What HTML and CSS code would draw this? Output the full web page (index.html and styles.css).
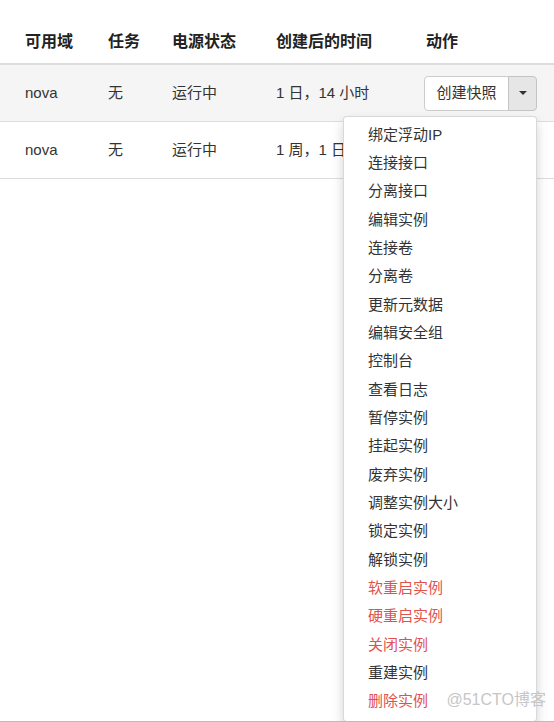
FILE: index.html
```html
<!DOCTYPE html>
<html lang="zh">
<head>
<meta charset="utf-8">
<link rel="stylesheet" href="styles.css">
</head>
<body>
<div class="table">
  <div class="row head">
    <div class="c c1">可用域</div>
    <div class="c c2">任务</div>
    <div class="c c3">电源状态</div>
    <div class="c c4">创建后的时间</div>
    <div class="c c5">动作</div>
  </div>
  <div class="row hover">
    <div class="c c1">nova</div>
    <div class="c c2">无</div>
    <div class="c c3">运行中</div>
    <div class="c c4">1 日，14 小时</div>
    <div class="c c5">
      <div class="btn-group">
        <span class="btn main">创建快照</span>
        <span class="btn caret-btn active"><span class="caret"></span></span>
        <ul class="menu">
          <li>绑定浮动IP</li>
          <li>连接接口</li>
          <li>分离接口</li>
          <li>编辑实例</li>
          <li>连接卷</li>
          <li>分离卷</li>
          <li>更新元数据</li>
          <li>编辑安全组</li>
          <li>控制台</li>
          <li>查看日志</li>
          <li>暂停实例</li>
          <li>挂起实例</li>
          <li>废弃实例</li>
          <li>调整实例大小</li>
          <li>锁定实例</li>
          <li>解锁实例</li>
          <li class="danger">软重启实例</li>
          <li class="danger">硬重启实例</li>
          <li class="danger">关闭实例</li>
          <li>重建实例</li>
          <li class="danger">删除实例</li>
        </ul>
      </div>
    </div>
  </div>
  <div class="row">
    <div class="c c1">nova</div>
    <div class="c c2">无</div>
    <div class="c c3">运行中</div>
    <div class="c c4">1 周，1 日</div>
    <div class="c c5">
      <div class="btn-group">
        <span class="btn main">创建快照</span>
        <span class="btn caret-btn"><span class="caret"></span></span>
      </div>
    </div>
  </div>
</div>
<div class="watermark">@51CTO博客</div>
</body>
</html>
```

FILE: styles.css
```css
html, body {
  margin: 0;
  padding: 0;
}
body {
  height: 721px;
  border-bottom: 1px solid #9cc3e6;
  background: #fff;
  font-family: "Liberation Sans", "Noto Sans CJK SC", sans-serif;
  font-size: 15px;
  color: #333;
  position: relative;
  overflow: hidden;
}
.table {
  width: 100%;
}
.row {
  display: grid;
  grid-template-columns: 25px 83px 64px 104px 148px 1fr;
  align-items: center;
  height: 56px;
  border-bottom: 1px solid #ddd;
}
.row::before {
  content: "";
}
.row.head {
  height: 63px;
  align-items: end;
  border-bottom: 2px solid #ddd;
  font-weight: bold;
  font-size: 16px;
  color: #222;
}
.row.head .c {
  padding-bottom: 11px;
}
.row.head .c5 {
  padding-left: 2px;
}
.row.hover {
  background: #f5f5f5;
}
.c {
  white-space: nowrap;
  line-height: 20px;
}
.btn-group {
  position: relative;
  display: flex;
  width: 113px;
  height: 35px;
}
.btn {
  display: flex;
  align-items: center;
  justify-content: center;
  border: 1px solid #ccc;
  background: #fff;
  box-sizing: border-box;
  height: 35px;
}
.btn.main {
  width: 85px;
  border-radius: 4px 0 0 4px;
}
.caret-btn {
  width: 29px;
  margin-left: -1px;
  border-radius: 0 4px 4px 0;
}
.caret-btn.active {
  background: #e6e6e6;
  border-color: #c4c4c4;
}
.caret {
  width: 0;
  height: 0;
  border-left: 4px solid transparent;
  border-right: 4px solid transparent;
  border-top: 4px solid #333;
}
.menu {
  position: absolute;
  top: 40px;
  right: 0;
  z-index: 10;
  width: 194px;
  box-sizing: border-box;
  margin: 0;
  padding: 4px 0 5px;
  list-style: none;
  background: #fff;
  border: 1px solid rgba(0, 0, 0, 0.15);
  border-radius: 4px;
  box-shadow: 0 6px 12px rgba(0, 0, 0, 0.175);
}
.menu li {
  height: 28.35px;
  line-height: 28.35px;
  padding-left: 24px;
  color: #333;
  white-space: nowrap;
}
.menu li.danger {
  color: #e0524e;
}
.watermark {
  position: absolute;
  right: 8px;
  bottom: 11px;
  z-index: 20;
  font-size: 16px;
  color: #c6c6c6;
}
```
